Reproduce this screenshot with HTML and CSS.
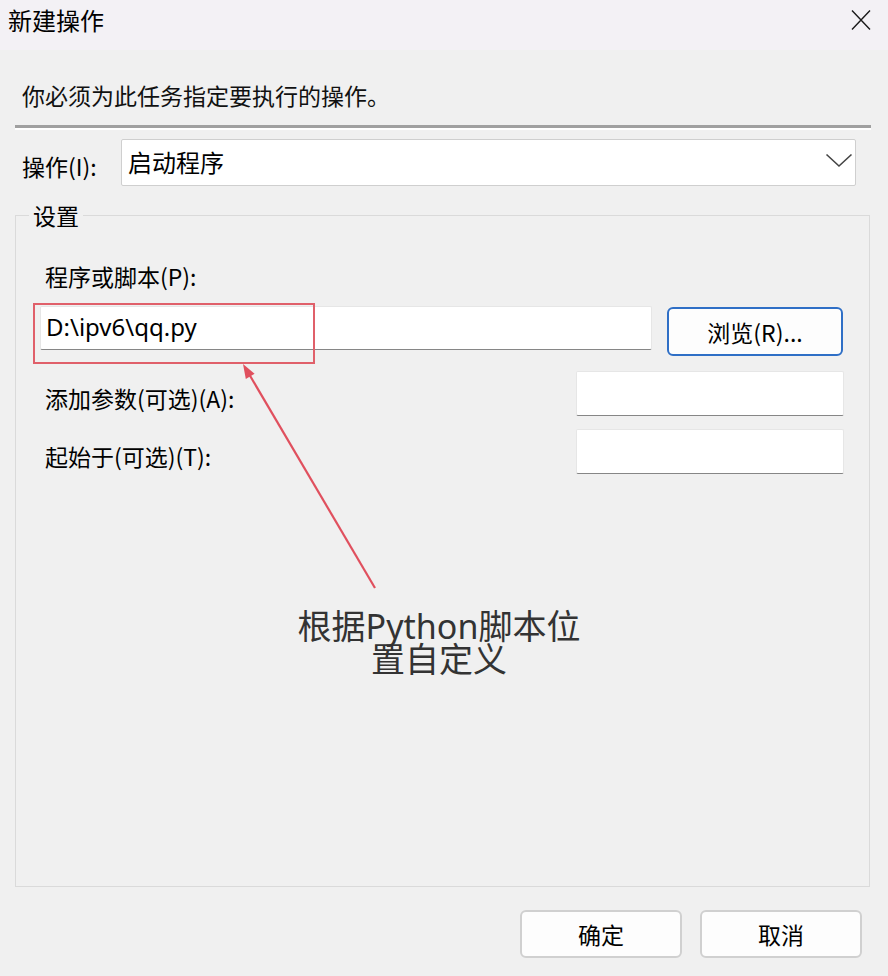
FILE: index.html
```html
<!DOCTYPE html>
<html lang="zh-CN">
<head>
<meta charset="utf-8">
<title>新建操作</title>
<link rel="stylesheet" href="styles.css">
</head>
<body>
<div class="dialog">
  <header class="titlebar">
    <span class="title">新建操作</span>
    <span class="close"><svg width="22" height="22" viewBox="0 0 22 22"><path d="M2 1.5 L20 20.5 M20 1.5 L2 20.5" stroke="#1a1a1a" stroke-width="1.4" fill="none"/></svg></span>
  </header>
  <div class="body">
    <p class="intro">你必须为此任务指定要执行的操作。</p>
    <div class="sep"></div>
    <div class="action-row">
      <span class="action-label">操作(I):</span>
      <div class="select">
        <span class="select-text">启动程序</span>
        <svg class="chev" width="28" height="15" viewBox="0 0 28 15"><path d="M1.5 1.5 L14 13 L26.5 1.5" stroke="#444" stroke-width="1.6" fill="none"/></svg>
      </div>
    </div>
    <fieldset class="group">
      <legend>设置</legend>
      <div class="field-label">程序或脚本(P):</div>
      <div class="prog-row">
        <div class="input prog">D:\ipv6\qq.py</div>
        <button class="btn browse">浏览(R)...</button>
      </div>
      <div class="opt-row first"><span class="opt-label">添加参数(可选)(A):</span><div class="input small"></div></div>
      <div class="opt-row second"><span class="opt-label">起始于(可选)(T):</span><div class="input small"></div></div>
    </fieldset>
    <div class="footer">
      <button class="btn action">确定</button>
      <button class="btn action">取消</button>
    </div>
  </div>
  <div class="mark-box"></div>
  <svg class="arrow" width="888" height="976" viewBox="0 0 888 976">
    <line x1="375" y1="588" x2="249" y2="374" stroke="#e0505e" stroke-width="2.2"/>
    <polygon points="243,364 245.8,379 254.6,373.8" fill="#e0505e"/>
  </svg>
  <div class="note">根据Python脚本位置自定义</div>
</div>
</body>
</html>
```

FILE: styles.css
```css
* { box-sizing: border-box; }
html, body { margin: 0; padding: 0; }
body {
  background: #f0f0f0;
  font-family: "Noto Sans", "Noto Sans CJK SC", sans-serif;
  color: #000;
}
.dialog {
  position: relative;
  width: 888px;
  height: 976px;
  overflow: hidden;
  background: #f0f0f0;
}
.titlebar {
  height: 50px;
  background: #f3f1f5;
  display: flex;
  align-items: center;
  justify-content: space-between;
  padding: 0 16px 10px 8px;
}
.title {
  font-size: 24px;
  line-height: 30px;
  font-family: "Noto Sans CJK SC", sans-serif;
}
.close { display: flex; }
.body {
  padding: 0 17px 0 15px;
}
.intro {
  margin: 30px 0 0 0;
  padding-left: 7px;
  font-size: 23px;
  line-height: 30px;
  font-family: "Noto Sans CJK SC", sans-serif;
  color: #111;
}
.sep {
  margin-top: 15px;
  height: 5px;
  border-top: 3px solid #a0a0a0;
  border-bottom: 2px solid #ffffff;
}
.action-row {
  margin-top: 9px;
  display: flex;
  align-items: center;
  padding-left: 7px;
}
.action-label {
  width: 99px;
  font-size: 23px;
  line-height: 30px;
  padding-top: 6px;
  font-family: "Noto Sans CJK SC", sans-serif;
}
.select {
  width: 735px;
  height: 47px;
  background: #fff;
  border: 1px solid #cfcfcf;
  border-radius: 2px;
  display: flex;
  align-items: center;
  justify-content: space-between;
  padding: 0 2px 0 6px;
}
.select-text {
  font-size: 24px;
  line-height: 30px;
  font-family: "Noto Sans CJK SC", sans-serif;
  margin-top: -2px;
}
.chev { margin-top: -4px; }
.group {
  margin: 14px 0 0 0;
  width: 855px;
  height: 687px;
  border: 1px solid #dadada;
  padding: 31px 25px 0 24px;
  min-width: 0;
}
.group legend {
  margin-left: -11px;
  padding: 0 4px;
  font-size: 23px;
  line-height: 30px;
  font-family: "Noto Sans CJK SC", sans-serif;
}
.field-label,
.opt-label {
  font-size: 23px;
  line-height: 30px;
  padding-left: 5px;
  font-family: "Noto Sans CJK SC", sans-serif;
}
.prog-row {
  margin-top: 15px;
  display: flex;
  align-items: flex-start;
}
.input {
  background: #fff;
  border: 1px solid #e6e6e6;
  border-bottom: 1px solid #868686;
  border-radius: 2px;
}
.prog {
  width: 612px;
  height: 44px;
  padding-left: 5px;
  font-size: 24px;
  line-height: 40px;
  color: #000;
}
.btn {
  font-family: "Noto Sans CJK SC", sans-serif;
  font-size: 23px;
  color: #000;
  background: #fdfdfd;
  border-radius: 6px;
  cursor: default;
  padding: 0;
}
.browse {
  margin-left: 15px;
  margin-top: 1px;
  width: 176px;
  height: 49px;
  border: 2px solid #2f6fc6;
}
.opt-row {
  display: flex;
  align-items: center;
}
.opt-row .opt-label { padding-top: 9px; }
.opt-row.first { margin-top: 15px; }
.opt-row.second { margin-top: 13px; }
.small {
  margin-left: auto;
  width: 268px;
  height: 45px;
}
.footer {
  margin-top: 23px;
  display: flex;
  justify-content: flex-end;
  gap: 18px;
  padding-right: 9px;
}
.action {
  width: 162px;
  height: 48px;
  border: 2px solid #d0d0d0;
}
.mark-box {
  position: absolute;
  left: 33px;
  top: 303px;
  width: 282px;
  height: 61px;
  border: 2px solid #e0606a;
}
.arrow {
  position: absolute;
  left: 0;
  top: 0;
  pointer-events: none;
}
.note {
  position: absolute;
  left: 289px;
  top: 610px;
  width: 300px;
  text-align: center;
  font-size: 34px;
  line-height: 33px;
  color: #333;
  font-family: "Noto Sans", "Noto Sans CJK SC", sans-serif;
}
```
